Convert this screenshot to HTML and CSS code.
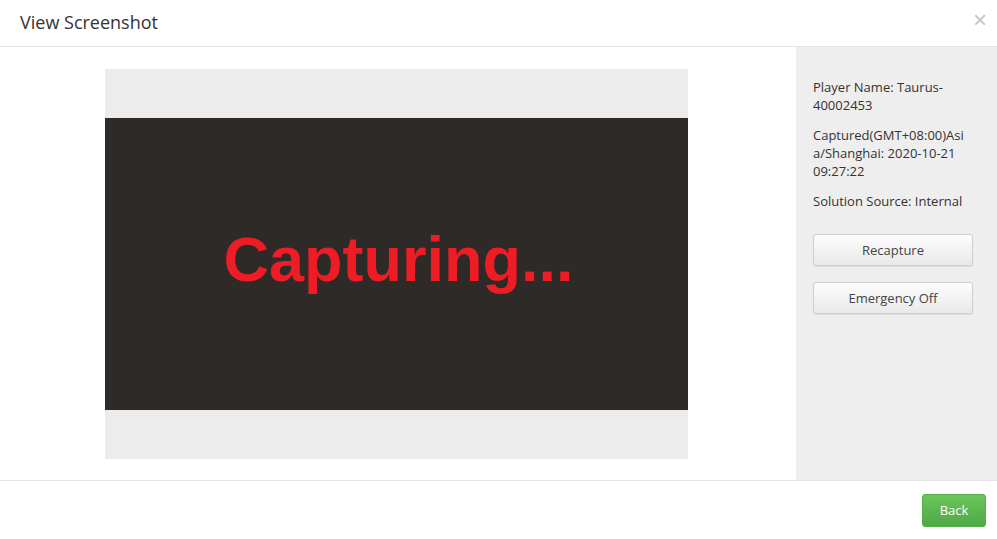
FILE: index.html
```html
<!DOCTYPE html>
<html>
<head>
    <title>View Screenshot</title>
    <link rel="stylesheet" href="styles.css">
</head>
<body>
    <div class="modal">
        <div class="modal-header">
            <h4 class="modal-title">View Screenshot</h4>
            <span class="close">&times;</span>
        </div>
        <div class="modal-body">
            <div class="preview">
                <div class="shot">
                    <div class="screen">Capturing...</div>
                </div>
            </div>
            <div class="side">
                <p>Player Name: Taurus-40002453</p>
                <p>Captured(GMT+08:00)Asia/Shanghai: 2020-10-21 09:27:22</p>
                <p>Solution Source: Internal</p>
                <button class="btn">Recapture</button>
                <button class="btn">Emergency Off</button>
            </div>
        </div>
        <div class="modal-footer">
            <button class="btn-back">Back</button>
        </div>
    </div>
</body>
</html>
```

FILE: styles.css
```css
body {
    margin: 0;
    font-family: "Open Sans", "Noto Sans", Arial, sans-serif;
    background-color: #fff;
}

.modal {
    width: 997px;
    height: 539px;
    display: flex;
    flex-direction: column;
    background-color: #fff;
}

.modal-header {
    height: 47px;
    border-bottom: 1px solid #e5e5e5;
    display: flex;
    align-items: center;
    justify-content: space-between;
    padding: 0 10px 0 20px;
    box-sizing: border-box;
    flex-shrink: 0;
}

.modal-title {
    margin: 0 0 2px 0;
    font-size: 18px;
    font-weight: normal;
    color: #333;
}

.close {
    font-family: Arial, sans-serif;
    font-size: 24px;
    color: #c4c4c4;
    margin-top: -6px;
}

.modal-body {
    flex: 1;
    display: flex;
    border-bottom: 1px solid #e5e5e5;
}

.preview {
    flex: 1;
    padding: 22px 0 0 105px;
}

.shot {
    width: 583px;
    height: 390px;
    background-color: #ececec;
    display: flex;
    align-items: center;
}

.screen {
    width: 100%;
    height: 292px;
    box-sizing: border-box;
    padding: 0 0 10px 4px;
    background-color: #2e2a27;
    color: #ee1c25;
    font-family: Arial, "Liberation Sans", sans-serif;
    font-weight: bold;
    font-size: 63px;
    display: flex;
    align-items: center;
    justify-content: center;
}

.side {
    width: 201px;
    background-color: #eeeeee;
    padding: 31px 29px 0 17px;
    box-sizing: border-box;
    font-size: 13px;
    line-height: 18px;
    color: #333;
}

.side p {
    margin: 0 0 12px 0;
    overflow-wrap: anywhere;
}

.btn {
    display: block;
    width: 160px;
    height: 32px;
    margin: 24px 0 16px 0;
    font-family: inherit;
    font-size: 13px;
    color: #444;
    background: linear-gradient(#fdfdfd, #e9e9e9);
    border: 1px solid #cfcfcf;
    border-radius: 3px;
    box-shadow: 0 1px 1px rgba(0, 0, 0, 0.08);
}

.btn + .btn {
    margin-top: 0;
}

.modal-footer {
    height: 58px;
    display: flex;
    align-items: center;
    justify-content: flex-end;
    padding-right: 11px;
    flex-shrink: 0;
}

.btn-back {
    width: 64px;
    height: 33px;
    font-family: inherit;
    font-size: 13px;
    color: #fff;
    background: linear-gradient(#6cc65a, #4ea846);
    border: 1px solid #52ac47;
    border-radius: 3px;
}
```
